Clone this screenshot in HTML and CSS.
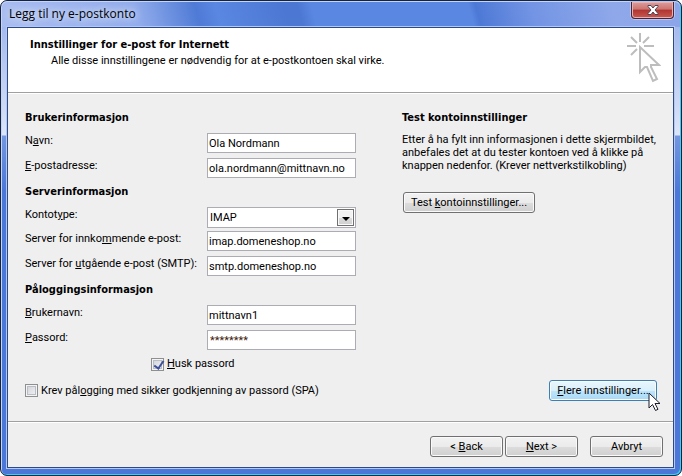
FILE: index.html
```html
<!DOCTYPE html>
<html lang="no">
<head>
  <title>Legg til ny e-postkonto</title>
  <meta charset="utf-8" />
  <link rel="stylesheet" href="styles.css">
</head>
<body>

  <div class="window">
    <div class="titlebar">
      <span class="title">Legg til ny e-postkonto</span>
      <button class="close" type="button" aria-label="Lukk">
        <svg width="12" height="10" viewBox="0 0 12 10">
          <path d="M1 .5h3L6 3 8 .5h3v1L8 5l3 3.500v1H8L6 7 4 9.500H1v-1L4 5 1 1.500z" fill="#fff" stroke="#4c4456" stroke-width="1"/>
        </svg>
      </button>
    </div>

    <form class="dialog">
      <header class="header">
        <div>
          <h1>Innstillinger for e-post for Internett</h1>
          <p>Alle disse innstillingene er nødvendig for at e-postkontoen skal virke.</p>
        </div>
        <svg class="wizard-icon" width="34" height="50" viewBox="0 0 34 50" fill="none" stroke="#bdbdbd" stroke-width="2">
          <path d="M13 0v9M0 13h9M17 13h10M4 4l6 6M22 4l-6 6M4 22l6-6"/>
          <path d="M13 14v25l5-5h2l6 14 4-2-6-12v-2h8z"/>
        </svg>
      </header>

      <div class="content">
        <div class="columns">
          <div class="settings">
            <section>
              <h2>Brukerinformasjon</h2>
              <div class="row">
                <label for="name">N<u>a</u>vn:</label>
                <input type="text" id="name" value="Ola Nordmann">
              </div>
              <div class="row">
                <label for="email"><u>E</u>-postadresse:</label>
                <input type="text" id="email" value="ola.nordmann@mittnavn.no">
              </div>
            </section>

            <section>
              <h2>Serverinformasjon</h2>
              <div class="row row-select">
                <label for="type">Kontot<u>y</u>pe:</label>
                <span class="select">
                  <select id="type">
                    <option>IMAP</option>
                    <option>POP3</option>
                  </select>
                  <span class="arrow"></span>
                </span>
              </div>
              <div class="row">
                <label for="incoming">Server for innko<u>m</u>mende e-post:</label>
                <input type="text" id="incoming" value="imap.domeneshop.no">
              </div>
              <div class="row">
                <label for="outgoing">Server for <u>u</u>tgående e-post (SMTP):</label>
                <input type="text" id="outgoing" value="smtp.domeneshop.no">
              </div>
            </section>

            <section>
              <h2>Påloggingsinformasjon</h2>
              <div class="row">
                <label for="user"><u>B</u>rukernavn:</label>
                <input type="text" id="user" value="mittnavn1">
              </div>
              <div class="row">
                <label for="password"><u>P</u>assord:</label>
                <input type="text" id="password" class="password" value="********" autocomplete="off">
              </div>
            </section>

            <label class="check remember"><input type="checkbox" checked><span><u>H</u>usk passord</span></label>
          </div>

          <section class="test">
            <h2>Test kontoinnstillinger</h2>
            <p>Etter å ha fylt inn informasjonen i dette skjermbildet, anbefales det at du tester kontoen ved å klikke på knappen nedenfor. (Krever nettverkstilkobling)</p>
            <button class="btn" type="button">Test <u>k</u>ontoinnstillinger...</button>
          </section>
        </div>

        <div class="more">
          <label class="check"><input type="checkbox"><span>Krev pål<u>o</u>gging med sikker godkjenning av passord (SPA)</span></label>
          <button class="btn hot" type="button"><u>F</u>lere innstillinger...
            <svg class="cursor" width="13" height="20" viewBox="0 0 13 20">
              <path d="M1 1v15l3.500-3.500 3 6 2.500-1.200-3-5.800h5z" fill="#fff" stroke="#1c1c2c"/>
            </svg>
          </button>
        </div>
      </div>

      <footer class="footer">
        <button class="btn" type="button">&lt; <u>B</u>ack</button>
        <button class="btn" type="button"><u>N</u>ext &gt;</button>
        <button class="btn cancel" type="button">Avbryt</button>
      </footer>
    </form>
  </div>

</body>
</html>
```
FILE: styles.css
```css
* {
  box-sizing: border-box;
}

html, body {
  height: 100%;
  margin: 0;
}

body {
  background-color: #fff;
  color: #000;
  font-family: Roboto, "Liberation Sans", sans-serif;
  font-size: 11px;
  line-height: 16px;
}

h1, h2, p {
  margin: 0;
  font-size: 11px;
}

h1, h2 {
  font-family: "DejaVu Sans Condensed", "DejaVu Sans", sans-serif;
}

button, input, select {
  font: inherit;
  color: inherit;
}

/* window frame */
.window {
  display: flex;
  flex-direction: column;
  min-height: 100vh;
  padding: 0 7px 7px 6px;
  border: 1px solid #16233f;
  border-radius: 7px;
  background: linear-gradient(#8aa4e8 0, #a5bbee 27px, #dce5f9 134px, #7397e0 135px, #4b78d8 190px, #4b78d8 100%);
  box-shadow: inset -1px -1px 0 #2fd3f7, inset 1px 1px 0 #c5d5f7;
}

.titlebar {
  display: flex;
  align-items: flex-start;
  justify-content: space-between;
  height: 26px;
  margin: 0 -6px 0 -5px;
  padding: 0 6px;
  border-top: 1px solid #c5d5f7;
  border-radius: 6px 6px 0 0;
  background: linear-gradient(75deg, #a9bdf0 0, #93adec 20%, #4f7bd6 29%, #5a87e1 32%, #4c78d4 42%, #4c78d4 44%, #5a87e2 46%, #5a87e2 69%, #4d79d6 70%, #7394e4 78%, #8fa8ea 90%, #8ba5e9 100%);
}

.title {
  padding: 3px 6px 0 1px;
  font-family: "Open Sans", "Noto Sans", sans-serif;
  font-size: 12px;
  line-height: 17px;
  text-shadow: 0 0 6px #dfe8fc, 0 0 10px #dfe8fc;
}

.close {
  display: flex;
  align-items: center;
  justify-content: center;
  width: 43px;
  height: 17px;
  padding: 0;
  border: 1px solid #49233a;
  border-top: none;
  border-radius: 0 0 4px 4px;
  background: linear-gradient(#dc9c9c, #cd7470 45%, #b03430 50%, #c75a50);
  box-shadow: inset 0 0 0 1px #e5b2b4, 0 0 0 1px #b7c6f0;
}

.dialog {
  display: flex;
  flex: 1;
  flex-direction: column;
  border: 1px solid #2c4a85;
  background-color: #efefef;
  box-shadow: 0 0 0 1px #b5c8f3;
}

/* white top panel */
.header {
  display: flex;
  justify-content: space-between;
  height: 65px;
  padding: 5px 12px 0 22px;
  border-bottom: 1px solid #a0a0a0;
  background-color: #fff;
}

.header h1 {
  padding-top: 4px;
}

.header p {
  padding-left: 21px;
  line-height: 15px;
}

.content {
  flex: 1;
  padding: 16px 16px 0 17px;
  border-top: 1px solid #fff;
}

.columns {
  display: flex;
  gap: 46px;
}

.settings {
  display: flex;
  flex: 0 0 331px;
  flex-direction: column;
}

.settings section {
  margin-bottom: 1px;
}

h2 {
  margin-bottom: 7px;
}

.row {
  display: flex;
  justify-content: space-between;
  height: 25px;
}

.row-select {
  height: 24px;
}

.row input, .select {
  width: 149px;
  height: 20px;
}

.row input, .select select {
  padding: 0 1px;
  border: 1px solid #abadb3;
  border-radius: 0;
  outline: none;
  background-color: #fff;
}

.row .password {
  padding: 0 2px;
  color: #40200c;
}

.row .select {
  position: relative;
  height: 21px;
}

.select select {
  width: 100%;
  height: 100%;
  padding-left: 2px;
  appearance: none;
}

.arrow {
  position: absolute;
  top: 2px;
  right: 2px;
  display: flex;
  align-items: center;
  justify-content: center;
  width: 17px;
  height: 17px;
  border: 1px solid #707070;
  background: linear-gradient(#f2f2f2 50%, #dcdcdc 50%, #cfcfcf);
  box-shadow: inset 0 0 0 1px #fafafa;
  pointer-events: none;
}

.arrow::after {
  content: "";
  margin-top: 3px;
  border: 4px solid transparent;
  border-top-color: #000;
  border-bottom: none;
}

.check {
  display: flex;
  align-items: center;
  gap: 3px;
}

.remember {
  padding-left: 126px;
}

.check input {
  width: 13px;
  height: 13px;
  margin: 0;
  appearance: none;
  border: 1px solid #8e8f8f;
  background: linear-gradient(135deg, #cbcfd5, #f6f6f6);
  box-shadow: inset 0 0 0 1px #f4f4f4, inset 0 0 0 2px #b9bec6;
}

.check input:checked::after {
  content: "";
  display: block;
  width: 4px;
  height: 8px;
  margin: 0 0 0 4px;
  border: solid #3c509c;
  border-width: 0 2px 2px 0;
  transform: rotate(35deg);
}

.test {
  flex: 1;
}

.test p {
  margin-bottom: 20px;
  line-height: 13px;
}

.test .btn {
  width: 132px;
  margin-left: 1px;
}

.btn {
  width: 73px;
  height: 21px;
  padding: 0;
  border: 1px solid #707070;
  border-radius: 3px;
  background: linear-gradient(#f2f2f2, #ebebeb 50%, #dddddd 50%, #cfcfcf);
  box-shadow: inset 0 0 0 1px #fafafa;
  white-space: nowrap;
}

.more {
  display: flex;
  align-items: center;
  justify-content: space-between;
  margin-top: 8px;
}

.hot {
  position: relative;
  width: 108px;
  border-color: #3c7fb1;
  background: linear-gradient(#eaf6fd, #d9f0fc 50%, #bee6fd 50%, #a7d9f5);
}

/* mouse pointer on top of the hot button */
.cursor {
  position: absolute;
  top: 11px;
  right: -5px;
}

.footer {
  display: flex;
  justify-content: flex-end;
  gap: 2px;
  height: 46px;
  padding: 14px 10px 0;
  border-top: 1px solid #a0a0a0;
  box-shadow: inset 0 1px 0 #fff;
}

.cancel {
  margin-left: 10px;
}
```
